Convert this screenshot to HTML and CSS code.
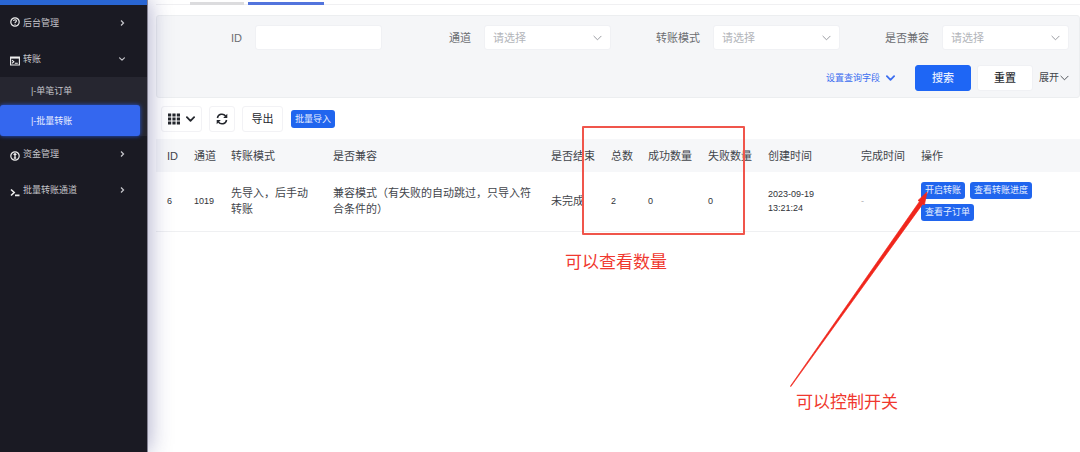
FILE: index.html
```html
<!DOCTYPE html>
<html lang="zh-CN">
<head>
<meta charset="utf-8">
<title>批量转账</title>
<link rel="stylesheet" href="styles.css">
</head>
<body>
<svg class="defs" aria-hidden="true">
  <symbol id="down" viewBox="0 0 10 6"><path d="M1 1l4 4 4-4" fill="none" stroke="currentColor" stroke-linecap="round" stroke-linejoin="round"/></symbol>
  <symbol id="right" viewBox="0 0 6 8"><path d="M2 1.5L4.5 4 2 6.5" fill="none" stroke="currentColor" stroke-width="1.3"/></symbol>
</svg>
<div class="app">
  <aside class="sidebar">
    <div class="brand"></div>
    <nav class="menu">
      <a class="item" href="#">
        <svg class="icon raised" viewBox="0 0 10 10"><circle cx="5" cy="5" r="4.2" fill="none" stroke="currentColor" stroke-width="1.2"/><path d="M3.6 4.1C3.6 2.2 6.5 2.3 6.4 4 6.3 5 5 5 5 6.1M5 6.8v1" fill="none" stroke="currentColor" stroke-width="1.1"/></svg>
        <span>后台管理</span><svg class="arrow"><use href="#right"/></svg>
      </a>
      <a class="item" href="#">
        <svg class="icon" viewBox="0 0 10 10"><path d="M.6 1h8.8v8H.6z" fill="none" stroke="currentColor" stroke-width="1.1"/><path d="M.5 1h9v1.6h-9z" fill="currentColor"/><path d="M2 4.2l1.8 1.5L2 7.3M4.8 7.3h3" fill="none" stroke="currentColor" stroke-width="1.1"/></svg>
        <span>转账</span><svg class="arrow open"><use href="#down"/></svg>
      </a>
      <div class="submenu">
        <a class="sub" href="#">|-单笔订单</a>
        <a class="sub active" href="#" aria-current="page">|-批量转账</a>
      </div>
      <a class="item" href="#">
        <svg class="icon" viewBox="0 0 10 10"><circle cx="5" cy="5" r="4.2" fill="none" stroke="currentColor" stroke-width="1.2"/><path d="M5 2.2v5.6M3.6 3.8L5 2.6l1.4 1.2M3.8 7.2h2.4" fill="none" stroke="currentColor" stroke-width="1.3"/></svg>
        <span>资金管理</span><svg class="arrow"><use href="#right"/></svg>
      </a>
      <a class="item" href="#">
        <svg class="icon" viewBox="0 0 10 10"><path d="M1 2.5l3.2 3L1 8.5M5 8.4h4.5" fill="none" stroke="currentColor" stroke-width="1.6"/></svg>
        <span>批量转账通道</span><svg class="arrow"><use href="#right"/></svg>
      </a>
    </nav>
  </aside>

  <main class="main">
    <div class="tabs"><span class="tab"></span><span class="tab current"></span></div>

    <form class="filters">
      <div class="fields">
        <div class="field"><label for="f-id">ID</label><input class="control" id="f-id" type="text"></div>
        <div class="field"><label for="f-channel">通道</label><div class="pick"><select class="control" id="f-channel"><option>请选择</option></select><svg class="caret"><use href="#down"/></svg></div></div>
        <div class="field"><label for="f-mode">转账模式</label><div class="pick"><select class="control" id="f-mode"><option>请选择</option></select><svg class="caret"><use href="#down"/></svg></div></div>
        <div class="field"><label for="f-compat">是否兼容</label><div class="pick"><select class="control" id="f-compat"><option>请选择</option></select><svg class="caret"><use href="#down"/></svg></div></div>
      </div>
      <div class="commands">
        <button class="link" type="button">设置查询字段<svg class="chev bold"><use href="#down"/></svg></button>
        <button class="btn primary" type="button">搜索</button>
        <button class="btn" type="button">重置</button>
        <button class="expand" type="button">展开<svg class="chev"><use href="#down"/></svg></button>
      </div>
    </form>

    <div class="toolbar">
      <button class="tool wide" type="button" aria-label="列设置">
        <svg class="glyph" viewBox="0 0 12 12"><path d="M0 .5h3.2v3H0zM4.4 .5h3.2v3H4.4zM8.8 .5H12v3H8.8zM0 4.5h3.2v3H0zM4.4 4.5h3.2v3H4.4zM8.8 4.5H12v3H8.8zM0 8.5h3.2v3H0zM4.4 8.5h3.2v3H4.4zM8.8 8.5H12v3H8.8z" fill="currentColor"/></svg>
        <svg class="chev bold"><use href="#down"/></svg>
      </button>
      <button class="tool" type="button" aria-label="刷新">
        <svg class="glyph" viewBox="0 0 12 12"><path d="M1.4 5A4.6 4.6 0 0 1 9.6 3M10.6 7A4.6 4.6 0 0 1 2.4 9" fill="none" stroke="currentColor" stroke-width="1.5"/><path d="M11.3.8v4.1H7.2zM.7 11.2V7.1h4.1z" fill="currentColor"/></svg>
      </button>
      <button class="tool wide" type="button">导出</button>
      <button class="tag import" type="button">批量导入</button>
    </div>

    <table class="grid">
      <colgroup><col class="c-id"><col class="c-short"><col class="c-mode"><col class="c-compat"><col class="c-word"><col class="c-short"><col class="c-word"><col class="c-word"><col class="c-time"><col class="c-word"><col></colgroup>
      <thead>
        <tr><th>ID</th><th>通道</th><th>转账模式</th><th>是否兼容</th><th>是否结束</th><th>总数</th><th>成功数量</th><th>失败数量</th><th>创建时间</th><th>完成时间</th><th>操作</th></tr>
      </thead>
      <tbody>
        <tr>
          <td class="num">6</td><td class="num">1019</td><td>先导入，后手动转账</td><td>兼容模式（有失败的自动跳过，只导入符合条件的）</td><td>未完成</td><td class="num">2</td><td class="num">0</td><td class="num">0</td><td class="num">2023-09-19 13:21:24</td><td class="num empty">-</td>
          <td><div class="actions"><button class="tag" type="button">开启转账</button><button class="tag" type="button">查看转账进度</button><button class="tag" type="button">查看子订单</button></div></td>
        </tr>
      </tbody>
    </table>

    <div class="notes">
      <div class="frame"></div>
      <svg class="pointer" viewBox="0 0 138 196"><path d="M.4 195.2L129.5 10.5l-1.5-1L137 1l-2.6 13-1.6-1.1L.8 195.6z" fill="#f0261c" stroke="#f0261c" stroke-width=".7"/></svg>
      <p class="note count">可以查看数量</p>
      <p class="note toggle">可以控制开关</p>
    </div>
  </main>
</div>
</body>
</html>
```

FILE: styles.css
```css
* { box-sizing: border-box; }

body {
  margin: 0;
  background: #fff;
  color: #42454b;
  font: 11px/16px "Liberation Sans", "Noto Sans CJK SC", sans-serif;
}

button, input, select { font: inherit; color: inherit; margin: 0; }
button { display: flex; align-items: center; justify-content: center; border: 0; padding: 0; background: none; white-space: nowrap; }
a { color: inherit; text-decoration: none; }
svg { display: block; flex: none; }
.defs { position: absolute; width: 0; height: 0; }

.app { display: flex; min-height: 100vh; }

/* Sidebar */
.sidebar {
  position: relative;
  z-index: 1;
  flex: none;
  width: 148px;
  background: #1a1a23;
  border-right: 1px solid #858394;
  box-shadow: 0 0 22px rgba(40, 40, 120, .42);
  color: #c3c3c8;
  font-size: 9px;
}
.brand { height: 5px; background: #2966d3; }
.item { display: flex; align-items: center; gap: 3px; height: 36px; padding: 0 22px 0 10px; }
.item span { flex: 1; }
.icon { width: 10px; height: 10px; margin-top: 3px; color: #eee; }
.icon.raised { margin-top: 0; margin-bottom: 3px; }
.arrow { width: 6px; height: 8px; }
.arrow.open { height: 4px; stroke-width: 2; }
.submenu { background: #262630; }
.sub { display: flex; align-items: center; height: 28px; padding-left: 31px; }
.sub.active {
  height: 31px;
  margin-right: 7px;
  border-radius: 3px;
  background: #3467ef;
  box-shadow: 0 0 4px #2457df;
  color: #e8edff;
}

/* Main column */
.main { position: relative; flex: 1; min-width: 0; padding-left: 8px; }
.tabs { display: flex; gap: 4px; height: 5px; padding: 2px 0 0 34px; border-bottom: 1px solid #f0f0f2; }
.tab { width: 54px; height: 3px; background: #dcdcde; }
.tab.current { width: 76px; background: #5274dd; }

/* Filters */
.filters {
  margin-top: 10px;
  padding: 9px 10px 6px 0;
  background: #f5f6f8;
  border: 1px solid #eceef0;
  border-radius: 3px;
}
.fields { display: grid; grid-template-columns: 225fr 229fr 229fr 229fr; }
.field { display: flex; align-items: center; justify-content: flex-end; gap: 13px; color: #6b6d71; }
.control {
  display: block;
  width: 127px;
  height: 25px;
  padding: 0 8px;
  border: 1px solid #f0f1f4;
  border-radius: 3px;
  background: #fff;
  appearance: none;
}
select.control { color: #b3b5ba; }
.pick { position: relative; }
.caret { position: absolute; top: 10px; right: 9px; width: 9px; height: 6px; color: #8e9197; }
.commands { display: flex; align-items: center; justify-content: flex-end; gap: 6px; margin-top: 15px; }
.btn { width: 56px; height: 26px; border-radius: 3px; background: #fff; border: 1px solid #f0f1f4; color: #2e3034; font-weight: 500; }
.btn.primary { background: #1e66f5; border-color: #1e66f5; color: #e6eeff; }
.link { gap: 6px; margin-right: 14px; color: #3b6df0; font-size: 9px; }
.expand { gap: 1px; font-size: 10px; }
.chev { width: 9px; height: 6px; }
.chev.bold { stroke-width: 2; }

/* Toolbar */
.toolbar { display: flex; align-items: center; gap: 7px; padding: 8px 5px 7px; }
.tool { gap: 6px; width: 26px; height: 26px; border: 1px solid #f2f2f5; border-radius: 3px; color: #24272d; }
.tool.wide { width: 41px; }
.glyph { width: 12px; height: 12px; }
.tag { height: 17px; padding: 0 4px; border-radius: 3px; background: #2065ee; color: #e4edff; font-size: 9px; line-height: 17px; }
.tag.import { height: 18px; margin-left: 1px; }

/* Table */
.grid { width: 100%; table-layout: fixed; border-collapse: collapse; }
.c-id { width: 27px; }
.c-short { width: 37px; }
.c-mode { width: 102px; }
.c-compat { width: 219px; }
.c-word { width: 60px; }
.c-time { width: 93px; }
.grid th, .grid td { padding: 0 6px 0 11px; text-align: left; font-weight: 400; }
.grid th { height: 33px; background: #f6f7f9; white-space: nowrap; }
.grid td { height: 59px; border-bottom: 1px solid #eff0f2; }
.grid th:nth-child(n+5), .grid td:nth-child(n+5) { padding-left: 10px; }
.grid .num { font-size: 9px; line-height: 14px; color: #303238; }
.grid .empty { color: #b0b0b4; }
.actions { display: flex; flex-wrap: wrap; gap: 5px; }

/* Annotations drawn over the page */
.frame { position: absolute; left: 434px; top: 126px; width: 163px; height: 109px; border: 2px solid #f0554b; border-radius: 1px; }
.pointer { position: absolute; left: 642px; top: 191px; width: 138px; height: 196px; }
.note { position: absolute; margin: 0; color: #f0382f; font-size: 17px; line-height: 24px; white-space: nowrap; }
.note.count { left: 417px; top: 251px; }
.note.toggle { left: 648px; top: 391px; }
```
